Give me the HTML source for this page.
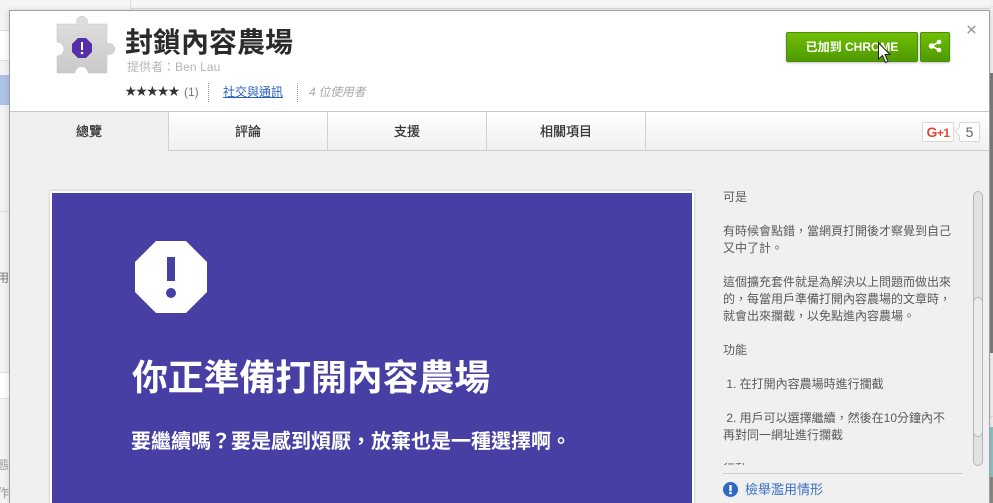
<!DOCTYPE html>
<html lang="zh-Hant">
<head>
<meta charset="utf-8">
<style>
html,body{margin:0;padding:0;width:993px;height:503px;overflow:hidden;background:#f2f2f2;font-family:"Liberation Sans","Noto Sans CJK TC",sans-serif;}
.a{position:absolute;white-space:nowrap;}
#stage{position:absolute;left:0;top:0;width:993px;height:503px;overflow:hidden;}
.tab{position:absolute;top:112px;height:39px;box-sizing:border-box;border-right:1px solid #d0d0d0;border-bottom:1px solid #d0d0d0;background:linear-gradient(#fff,#f0f0f0);text-align:center;font-size:13px;line-height:40px;color:#333;-webkit-text-stroke:0.25px #333;}
</style>
</head>
<body>
<div id="stage">
<!-- background page top -->
<div class="a" style="left:0;top:0;width:993px;height:10px;background:#f6f6f6;"></div>
<div class="a" style="left:130px;top:0;width:1px;height:10px;background:#ddd;"></div>
<div class="a" style="left:131px;top:8px;width:862px;height:1px;background:#ddd;"></div>
<!-- background page left -->
<div class="a" style="left:0;top:0;width:9px;height:503px;background:#f3f3f3;"></div>
<div class="a" style="left:0;top:30px;width:9px;height:29px;background:#fff;border-top:1px solid #ddd;border-bottom:1px solid #ddd;"></div>
<div class="a" style="left:0;top:75px;width:9px;height:30px;background:#aec2e6;"></div>
<div class="a" style="left:0;top:211px;width:9px;height:1px;background:#ddd;"></div>
<div class="a" style="left:0;top:372px;width:9px;height:25px;background:#fff;border-top:1px solid #e0e0e0;border-bottom:1px solid #e0e0e0;"></div>
<div class="a" style="left:0;top:270px;width:9px;height:17px;overflow:hidden;font-size:12px;line-height:17px;color:#777;"><span style="position:absolute;left:-15px;">使用</span></div>
<div class="a" style="left:0;top:457px;width:9px;height:17px;overflow:hidden;font-size:12px;line-height:17px;color:#999;"><span style="position:absolute;left:-15px;">狀態</span></div>
<div class="a" style="left:0;top:485px;width:9px;height:17px;overflow:hidden;font-size:12px;line-height:17px;color:#999;"><span style="position:absolute;left:-15px;">操作</span></div>
<!-- background page right -->
<div class="a" style="left:990px;top:0;width:3px;height:503px;background:#f2f2f2;"></div>
<div class="a" style="left:990px;top:6px;width:3px;height:1px;background:#ddd;"></div>
<div class="a" style="left:990px;top:73px;width:3px;height:280px;background:#7d7d78;"></div>
<div class="a" style="left:990px;top:416px;width:3px;height:1px;background:#ddd;"></div>
<div class="a" style="left:990px;top:427px;width:3px;height:50px;background:#8fc4c4;"></div>
<div class="a" style="left:990px;top:477px;width:3px;height:26px;background:#8a8a80;"></div>

<!-- modal -->
<div class="a" style="left:9px;top:10px;width:981px;height:493px;box-sizing:border-box;border:1px solid #a0a0a0;border-bottom:0;background:#f0f0f0;box-shadow:0 0 6px rgba(0,0,0,.15);"></div>
<div class="a" style="left:10px;top:11px;width:979px;height:100px;background:#fff;border-bottom:1px solid #c8c8c8;"></div>
<div class="a" style="left:168px;top:112px;width:821px;height:39px;background:linear-gradient(#fff,#f0f0f0);border-bottom:1px solid #d0d0d0;box-sizing:border-box;"></div>

<!-- puzzle icon -->
<svg class="a" style="left:50px;top:10px;" width="70" height="70" viewBox="0 0 70 70">
<defs><linearGradient id="g" x1="0" y1="0" x2="0" y2="1"><stop offset="0" stop-color="#e0e0e0"/><stop offset="1" stop-color="#cacaca"/></linearGradient></defs>
<path d="M7 14H27A5.500 5.500 0 1 1 37 14H57V34A5.500 5.500 0 1 1 57 44V63H38A6.500 6.500 0 0 0 25 63H7V46A7 7 0 0 0 7 32Z" fill="url(#g)" stroke="#c0c0c0" stroke-width="0.500"/>
<polygon points="28,28 36,28 42,34 42,42 36,48 28,48 22,42 22,34" fill="#5330a8"/>
<rect x="31" y="32" width="2" height="8" fill="#fff"/>
<circle cx="32" cy="43" r="1.300" fill="#fff"/>
</svg>

<!-- title -->
<div class="a" style="left:125px;top:25px;font-size:28px;line-height:36px;font-weight:bold;color:#2b2b2b;">封鎖內容農場</div>
<div class="a" style="left:127px;top:60px;font-size:12px;line-height:15px;color:#b5b5b5;">提供者：<span style="letter-spacing:.1px;">Ben Lau</span></div>
<div class="a" style="left:125px;top:85px;font-size:11.500px;line-height:14px;color:#333;letter-spacing:-0.700px;">★★★★★</div>
<div class="a" style="left:184px;top:84px;font-size:12px;line-height:16px;color:#777;">(1)</div>
<div class="a" style="left:208px;top:83px;width:0;height:19px;border-left:1px dotted #999;"></div>
<div class="a" style="left:223px;top:84px;font-size:12px;line-height:16px;color:#2a62c0;text-decoration:underline;">社交與通訊</div>
<div class="a" style="left:297px;top:83px;width:0;height:19px;border-left:1px dotted #999;"></div>
<div class="a" style="left:309px;top:84px;font-size:12px;line-height:16px;color:#aaa;font-style:italic;letter-spacing:-.3px;">4 位使用者</div>

<!-- green buttons -->
<div class="a" style="left:786px;top:32px;width:132px;height:30px;box-sizing:border-box;border:1px solid #4a8a0c;border-radius:2px;background:linear-gradient(#6fbf05,#4f9a00);box-shadow:0 1px 2px rgba(0,0,0,.25);color:#fff;font-size:12px;font-weight:bold;line-height:28px;text-align:center;">已加到 CHROME</div>
<div class="a" style="left:920px;top:32px;width:30px;height:30px;box-sizing:border-box;border:1px solid #4a8a0c;border-radius:2px;background:linear-gradient(#6fbf05,#4f9a00);box-shadow:0 1px 2px rgba(0,0,0,.25);"></div>
<svg class="a" style="left:927px;top:38px;" width="16" height="16" viewBox="0 0 16 16">
<path d="M4.500 8L12 4M4.500 8L12 12" stroke="#fff" stroke-width="1.800"/>
<circle cx="4.500" cy="8" r="2.800" fill="#fff"/><circle cx="12" cy="4" r="2.300" fill="#fff"/><circle cx="12" cy="12" r="2.300" fill="#fff"/>
</svg>
<!-- cursor -->
<svg class="a" style="left:877px;top:42px;" width="16" height="22" viewBox="0 0 16 22">
<path d="M1.500 1V17L5.500 13.500L8.500 20.500L11 19.500L8 12.500H13Z" fill="#fff" stroke="#222" stroke-width="1"/>
</svg>
<!-- close -->
<svg class="a" style="left:966px;top:24px;" width="11" height="11" viewBox="0 0 11 11"><path d="M1.800 1.800L9.200 9.200M9.200 1.800L1.800 9.200" stroke="#a0a0a0" stroke-width="1.600"/></svg>

<!-- tabs -->
<div class="tab" style="left:10px;width:159px;background:#f0f0f0;border-bottom:0;">總覽</div>
<div class="tab" style="left:169px;width:159px;">評論</div>
<div class="tab" style="left:328px;width:159px;">支援</div>
<div class="tab" style="left:487px;width:159px;">相關項目</div>

<!-- g+1 -->
<div class="a" style="left:922px;top:122px;width:32px;height:20px;box-sizing:border-box;border:1px solid #d8d8d8;border-radius:2px;background:#fff;color:#dd4b39;font-size:12px;font-weight:bold;line-height:18px;text-align:center;letter-spacing:-0.500px;"><span style="font-size:14px;">G</span>+1</div>
<div class="a" style="left:959px;top:122px;width:21px;height:20px;box-sizing:border-box;border:1px solid #d8d8d8;border-radius:2px;background:#fff;color:#666;font-size:14px;line-height:18px;text-align:center;">5</div>
<div class="a" style="left:956px;top:128px;width:6px;height:6px;background:#fff;border-left:1px solid #d8d8d8;border-bottom:1px solid #d8d8d8;transform:rotate(45deg);"></div>

<!-- main banner -->
<div class="a" style="left:50px;top:191px;width:644px;height:312px;box-sizing:border-box;border:2px solid #fff;border-bottom:0;background:#473fa3;box-shadow:0 0 3px rgba(0,0,0,.2);"></div>
<svg class="a" style="left:135px;top:241px;" width="72" height="72" viewBox="0 0 72 72">
<polygon points="21,0 51,0 72,21 72,51 51,72 21,72 0,51 0,21" fill="#fff"/>
<rect x="32" y="16" width="8" height="24" fill="#473fa3"/>
<circle cx="36" cy="52" r="5" fill="#473fa3"/>
</svg>
<div class="a" style="left:132px;top:356px;font-size:36px;line-height:44px;font-weight:bold;color:#fff;letter-spacing:-.2px;">你正準備打開內容農場</div>
<div class="a" style="left:131px;top:429px;font-size:20px;line-height:26px;font-weight:bold;color:#fff;">要繼續嗎？要是感到煩厭，放棄也是一種選擇啊。</div>

<!-- description -->
<div class="a" style="left:723px;top:189px;width:233px;height:276px;overflow:hidden;font-size:12px;line-height:17px;color:#5a5a5a;white-space:normal;">
可是<br><br>
有時候會點錯，當網頁打開後才察覺到自己<br>又中了計。<br><br>
這個擴充套件就是為解決以上問題而做出來<br>的，每當用戶準備打開內容農場的文章時，<br>就會出來攔截，以免點進內容農場。<br><br>
功能<br><br>
&nbsp;1. 在打開內容農場時進行攔截<br><br>
&nbsp;2. 用戶可以選擇繼續，然後在10分鐘內不<br>再對同一網址進行攔截<br><br>
行動
</div>
<!-- scrollbar -->
<div class="a" style="left:973px;top:191px;width:10px;height:275px;box-sizing:border-box;border:1px solid #b5b5b5;border-radius:5px;background:#e2e2e2;"></div>
<div class="a" style="left:973px;top:297px;width:10px;height:140px;box-sizing:border-box;border:1px solid #b5b5b5;border-radius:5px;background:#ececec;"></div>

<div class="a" style="left:723px;top:473px;width:240px;height:1px;background:#ccc;"></div>
<svg class="a" style="left:723px;top:482px;" width="15" height="15" viewBox="0 0 15 15">
<circle cx="7.500" cy="7.500" r="7.500" fill="#2f68c0"/>
<rect x="6.300" y="3" width="2.400" height="6" fill="#fff"/>
<circle cx="7.500" cy="11" r="1.400" fill="#fff"/>
</svg>
<div class="a" style="left:745px;top:481px;font-size:13px;line-height:18px;color:#3a6fc4;">檢舉濫用情形</div>
</div>
</body>
</html>
